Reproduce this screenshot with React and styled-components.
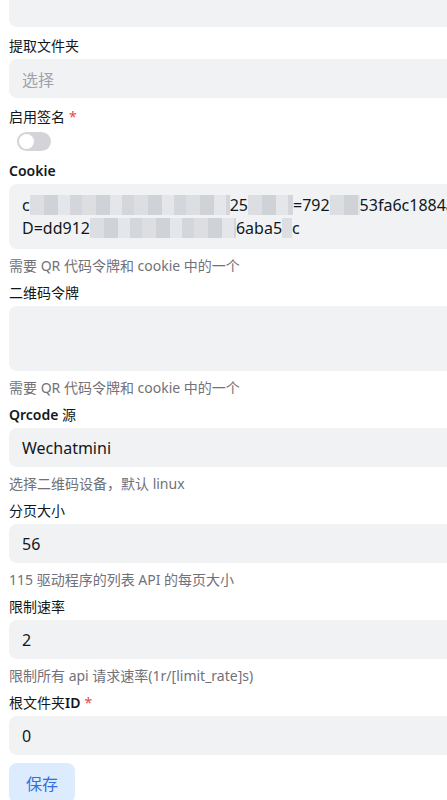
import styled, { createGlobalStyle } from "styled-components";

const GlobalStyle = createGlobalStyle`
  html, body {
    margin: 0;
    padding: 0;
    background: #ffffff;
    overflow: hidden;
  }
  body {
    font-family: "Noto Sans", "Noto Sans CJK SC", sans-serif;
    color: #11181c;
  }
`;

const Page = styled.form`
  width: 620px;
  margin-top: -12px;
  padding-left: 9px;
  display: flex;
  flex-direction: column;
  gap: 8px;
`;

const Field = styled.div`
  display: flex;
  flex-direction: column;
  gap: 4px;
`;

const Label = styled.label`
  height: 20px;
  display: flex;
  align-items: center;
  font-size: 14px;
  color: #11181c;
  white-space: pre;
`;

const Latin = styled.span`
  font-weight: 600;
`;

const Star = styled.span`
  color: #e5484d;
  margin-left: 4px;
`;

const Box = styled.div`
  box-sizing: border-box;
  height: ${(p) => p.$h || 39}px;
  padding: ${(p) => (p.$multi ? "9px 13px" : "0 13px")};
  display: flex;
  align-items: ${(p) => (p.$multi ? "flex-start" : "center")};
  flex-direction: ${(p) => (p.$multi ? "column" : "row")};
  background: #f1f2f4;
  border-radius: 8px;
  font-size: 16px;
  color: ${(p) => (p.$placeholder ? "#a1a1aa" : "#11181c")};
  white-space: nowrap;
  overflow: hidden;
`;

const Help = styled.div`
  margin-top: 3px;
  height: 18px;
  display: flex;
  align-items: center;
  font-size: 14px;
  color: #71717a;
  white-space: pre;
`;

const SwitchRow = styled.div`
  height: 22px;
  display: flex;
  align-items: center;
  padding-left: 8px;
`;

const Switch = styled.div`
  width: 34px;
  height: 19px;
  border-radius: 10px;
  background: #d4d4d8;
  display: flex;
  align-items: center;
  padding: 0 2px;
  box-sizing: border-box;
`;

const Knob = styled.div`
  width: 15px;
  height: 15px;
  border-radius: 50%;
  background: #ffffff;
`;

// pixelated blur that hides the private part of the cookie
const Mosaic = styled.span`
  display: inline-block;
  height: 20px;
  background: repeating-linear-gradient(
    90deg,
    #dcdee2 0 14px,
    #cfd2d7 14px 28px,
    #e4e6e9 28px 40px,
    #d3d6da 40px 52px
  );
  filter: blur(0.6px);
`;

const Line = styled.div`
  display: flex;
  align-items: center;
  height: 23px;
  white-space: pre;
`;

const Button = styled.button`
  align-self: flex-start;
  width: 66px;
  height: 40px;
  border: none;
  border-radius: 8px;
  background: #dcebfe;
  color: #2f6fe0;
  font-family: "Noto Sans", "Noto Sans CJK SC", sans-serif;
  font-size: 16px;
  padding: 0;
`;

const Hint = "需要 QR 代码令牌和 cookie 中的一个";

export default function App() {
  return (
    <>
      <GlobalStyle />
      <Page>
        <Box />
        <Field>
          <Label>提取文件夹</Label>
          <Box $placeholder>选择</Box>
        </Field>
        <Field>
          <Label>
            启用签名<Star>*</Star>
          </Label>
          <SwitchRow>
            <Switch>
              <Knob />
            </Switch>
          </SwitchRow>
        </Field>
        <Field>
          <Label>
            <Latin>Cookie</Latin>
          </Label>
          <Box $multi $h={65}>
            <Line>
              c<Mosaic style={{ width: 200 }} />
              25
              <Mosaic style={{ width: 45 }} />
              =792
              <Mosaic style={{ width: 30 }} />
              53fa6c1884a36;
            </Line>
            <Line>
              D=dd912
              <Mosaic style={{ width: 146 }} />
              6aba5
              <Mosaic style={{ width: 10 }} />c
            </Line>
          </Box>
          <Help>{Hint}</Help>
        </Field>
        <Field>
          <Label>二维码令牌</Label>
          <Box $multi $h={65} />
          <Help>{Hint}</Help>
        </Field>
        <Field>
          <Label>
            <Latin>Qrcode</Latin> 源
          </Label>
          <Box>Wechatmini</Box>
          <Help>选择二维码设备，默认 linux</Help>
        </Field>
        <Field>
          <Label>分页大小</Label>
          <Box>56</Box>
          <Help>115 驱动程序的列表 API 的每页大小</Help>
        </Field>
        <Field>
          <Label>限制速率</Label>
          <Box>2</Box>
          <Help>限制所有 api 请求速率(1r/[limit_rate]s)</Help>
        </Field>
        <Field>
          <Label>
            根文件夹<Latin>ID</Latin>
            <Star>*</Star>
          </Label>
          <Box>0</Box>
        </Field>
        <Button type="button">保存</Button>
      </Page>
    </>
  );
}
